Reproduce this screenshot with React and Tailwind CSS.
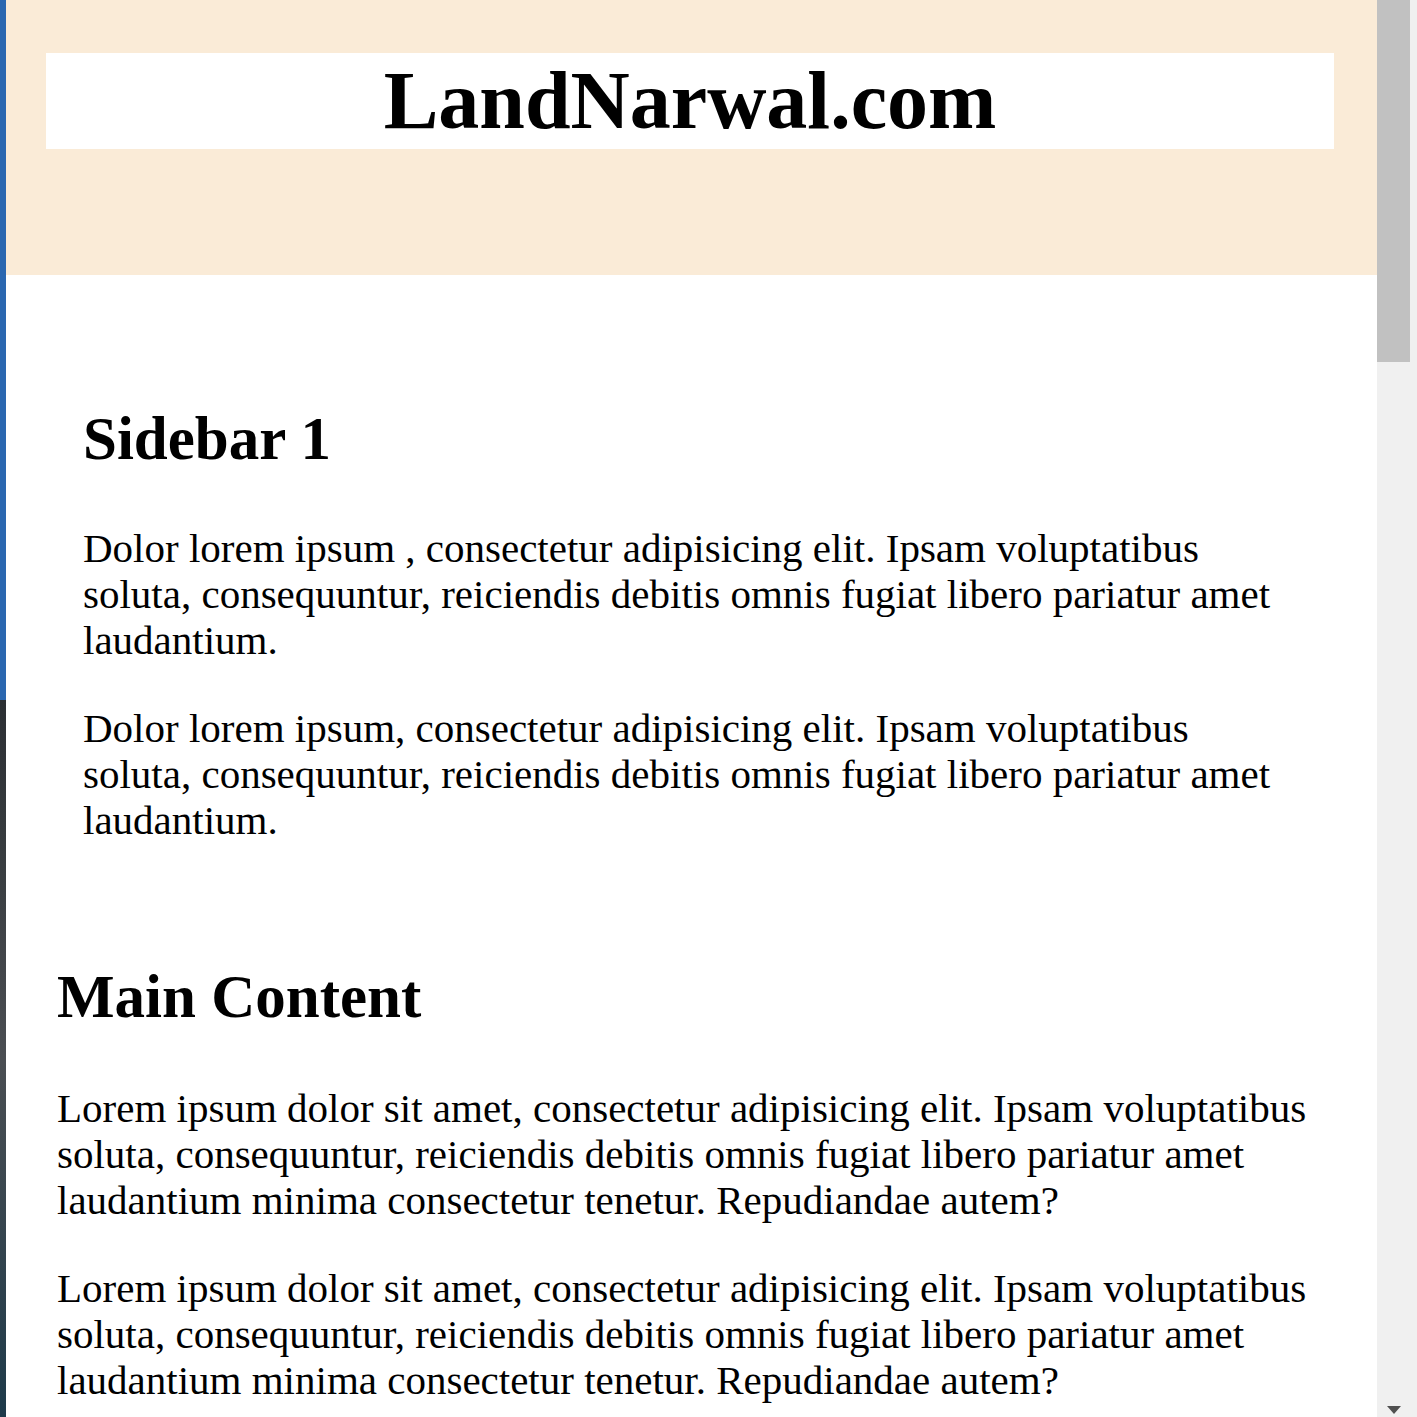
const serif = { fontFamily: '"Liberation Serif", "Times New Roman", serif' };

const sidebarText = [
  'Dolor lorem ipsum , consectetur adipisicing elit. Ipsam voluptatibus soluta, consequuntur, reiciendis debitis omnis fugiat libero pariatur amet laudantium.',
  'Dolor lorem ipsum, consectetur adipisicing elit. Ipsam voluptatibus soluta, consequuntur, reiciendis debitis omnis fugiat libero pariatur amet laudantium.',
];

const mainText = [
  'Lorem ipsum dolor sit amet, consectetur adipisicing elit. Ipsam voluptatibus soluta, consequuntur, reiciendis debitis omnis fugiat libero pariatur amet laudantium minima consectetur tenetur. Repudiandae autem?',
  'Lorem ipsum dolor sit amet, consectetur adipisicing elit. Ipsam voluptatibus soluta, consequuntur, reiciendis debitis omnis fugiat libero pariatur amet laudantium minima consectetur tenetur. Repudiandae autem?',
];

function Scrollbar() {
  return (
    <div className="w-[40px] shrink-0 bg-[#f0f0f0] flex flex-col justify-between">
      <div className="w-[33px] h-[362px] bg-[#c1c1c1]" />
      <div className="flex justify-center pr-[7px] pb-[3px]">
        <svg width="14" height="8" viewBox="0 0 14 8">
          <path d="M0 0 H14 L7 8 Z" fill="#505050" />
        </svg>
      </div>
    </div>
  );
}

export default function App() {
  return (
    <div className="flex h-[1417px] w-[1417px] overflow-hidden bg-white text-black" style={serif}>
      <div className="w-[6px] shrink-0 flex flex-col">
        <div className="h-[700px] bg-[#2a67b0]" />
        <div className="flex-1 bg-gradient-to-b from-[#2b2f33] via-[#4a4e52] to-[#1d3a4a]" />
      </div>

      <div className="flex-1 min-w-0 flex flex-col">
        <header className="h-[275px] bg-[#faebd7] pt-[53px] pl-[40px] pr-[43px]">
          <h1 className="bg-white h-[96px] text-center text-[82px] leading-[96px] font-bold">
            LandNarwal.com
          </h1>
        </header>

        <aside className="pt-[129px] pl-[77px] pr-[87px]">
          <h2 className="text-[61px] leading-[70px] font-bold">Sidebar 1</h2>
          <div className="mt-[51px] flex flex-col gap-[42px]">
            {sidebarText.map((t, i) => (
              <p key={i} className="text-[41px] leading-[46px]">{t}</p>
            ))}
          </div>
        </aside>

        <main className="pt-[119px] pl-[51px] pr-[43px]">
          <h2 className="text-[61px] leading-[70px] font-bold">Main Content</h2>
          <div className="mt-[53px] flex flex-col gap-[42px]">
            {mainText.map((t, i) => (
              <p key={i} className="text-[41px] leading-[46px]">{t}</p>
            ))}
          </div>
        </main>
      </div>

      <Scrollbar />
    </div>
  );
}
